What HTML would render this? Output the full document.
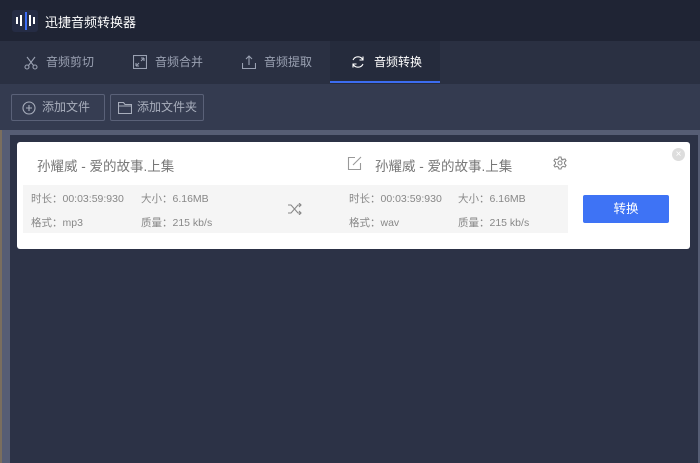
<!DOCTYPE html>
<html><head><meta charset="utf-8"><style>
*{margin:0;padding:0;box-sizing:border-box}
body{width:700px;height:463px;overflow:hidden;background:#2c3246;font-family:"Liberation Sans","Noto Sans CJK SC",sans-serif;position:relative}
.abs{position:absolute}
.title{left:0;top:0;width:700px;height:41px;background:#1f2434}
.tabs{left:0;top:41px;width:700px;height:43px;background:#2a3042}
.tool{left:0;top:84px;width:700px;height:46px;background:#343b50}
.frame{left:0;top:130px;width:700px;height:333px;background:#565d74}
.inner{left:10px;top:135px;width:688px;height:328px;background:#2c3246}
.tab{top:41px;height:43px;color:#9aa1b2;font-size:12px;line-height:43px}
.btn{top:94px;height:27px;border:1px solid #5a6178;border-radius:2px;color:#a8aebc;font-size:12px;line-height:25px;background:#363d52}
.card{left:17px;top:142px;width:673px;height:107px;background:#fff;border-radius:3px}
.info{top:185px;height:48px;background:#f5f5f5}
.t{font-size:10.5px;color:#888}
.h{font-size:13.5px;color:#777;top:155px}
svg{position:absolute;fill:none}
</style></head><body>
<div class="abs title"></div>
<div class="abs" style="left:12px;top:10px;width:26px;height:22px;background:#252c44;border-radius:3px"></div>
<div class="abs" style="left:16px;top:17px;width:2px;height:7px;background:#fff"></div>
<div class="abs" style="left:20px;top:15px;width:2px;height:11px;background:#fff"></div>
<div class="abs" style="left:25px;top:12px;width:2px;height:18px;background:#3b6cf5"></div>
<div class="abs" style="left:29px;top:15px;width:2px;height:11px;background:#fff"></div>
<div class="abs" style="left:33px;top:17px;width:2px;height:7px;background:#fff"></div>
<div class="abs" style="left:45px;top:12px;color:#fff;font-size:13px">迅捷音频转换器</div>
<div class="abs tabs"></div>
<div class="abs" style="left:330px;top:41px;width:110px;height:43px;background:#252b3c"></div>
<div class="abs" style="left:330px;top:81px;width:110px;height:2px;background:#3c6cf0"></div>
<svg style="left:24px;top:56px" width="14" height="14" stroke="#9aa1b2" stroke-width="1.1"><circle cx="3" cy="11" r="2"/><circle cx="11" cy="11" r="2"/><path d="M4.5 9.5L11 1M9.5 9.5L3 1"/></svg>
<div class="abs tab" style="left:46px">音频剪切</div>
<svg style="left:133px;top:55px" width="14" height="14" stroke="#9aa1b2" stroke-width="1.1"><rect x="0.5" y="0.5" width="13" height="13"/><path d="M3 11L6 8M3 11h3M3 11v-3M11 3L8 6M11 3H8M11 3v3"/></svg>
<div class="abs tab" style="left:155px">音频合并</div>
<svg style="left:242px;top:55px" width="14" height="14" stroke="#9aa1b2" stroke-width="1.1"><path d="M0.5 8v5.5h13V8M7 1v9M4 4l3-3 3 3"/></svg>
<div class="abs tab" style="left:264px">音频提取</div>
<svg style="left:351px;top:55px" width="14" height="14" stroke="#fff" stroke-width="1.1"><path d="M12 5A5.5 5.5 0 0 0 2 5M2 9a5.5 5.5 0 0 0 10 0M12 1.5V5H8.5M2 12.5V9h3.5"/></svg>
<div class="abs tab" style="left:374px;color:#fff">音频转换</div>
<div class="abs tool"></div>
<div class="abs btn" style="left:11px;width:94px;padding-left:30px">添加文件</div>
<svg style="left:22px;top:101px" width="14" height="14" stroke="#a8aebc" stroke-width="1.1"><circle cx="7" cy="7" r="6"/><path d="M7 4v6M4 7h6"/></svg>
<div class="abs btn" style="left:110px;width:94px;padding-left:26px">添加文件夹</div>
<svg style="left:118px;top:101px" width="14" height="13" stroke="#a8aebc" stroke-width="1.1"><path d="M0.5 1.5h5l1.5 2h6.5v9H0.5zM0.5 5h13"/></svg>
<div class="abs frame"></div>
<div class="abs" style="left:0;top:130px;width:2px;height:333px;background:#7a6e5e"></div>
<div class="abs inner"></div>
<div class="abs card"></div>
<div class="abs h" style="left:37px">孙耀威 - 爱的故事.上集</div>
<svg style="left:347px;top:156px" width="15" height="15" stroke="#999" stroke-width="1.1"><path d="M8 1.5H1.5v12h12V7M6 9l8-8"/></svg>
<div class="abs h" style="left:375px">孙耀威 - 爱的故事.上集</div>
<svg style="left:553px;top:156px" width="14" height="14" stroke="#888" stroke-width="1.1"><circle cx="7" cy="7" r="2"/><path d="M6 1h2l.5 2 1.8 1-2-.2L12 3l1 1.7-1.5 1.5v1.6L13 9.3 12 11l-2-.6-1.5.9L8 13H6l-.5-1.7L4 10.4 2 11 1 9.3l1.5-1.5V6.2L1 4.7 2 3l2 .6L5.5 2.7z"/></svg>
<div class="abs" style="left:672px;top:148px;width:13px;height:13px;border-radius:50%;background:#ddd;color:#fff;font-size:10px;line-height:13px;text-align:center">×</div>
<div class="abs info" style="left:23px;width:545px"></div>
<div class="abs t" style="left:31px;top:191px">时长：00:03:59:930</div>
<div class="abs t" style="left:141px;top:191px">大小：6.16MB</div>
<div class="abs t" style="left:31px;top:215px">格式：mp3</div>
<div class="abs t" style="left:141px;top:215px">质量：215 kb/s</div>
<svg style="left:288px;top:203px" width="14" height="12" stroke="#888" stroke-width="1.1"><path d="M0 2h3l7 8h3M0 10h3l7-8h3M11 0l2 2-2 2M11 8l2 2-2 2"/></svg>
<div class="abs t" style="left:349px;top:191px">时长：00:03:59:930</div>
<div class="abs t" style="left:458px;top:191px">大小：6.16MB</div>
<div class="abs t" style="left:349px;top:215px">格式：wav</div>
<div class="abs t" style="left:458px;top:215px">质量：215 kb/s</div>
<div class="abs" style="left:583px;top:195px;width:86px;height:28px;background:#3e73f5;border-radius:2px;color:#fff;font-size:12.5px;line-height:28px;text-align:center">转换</div>
</body></html>
